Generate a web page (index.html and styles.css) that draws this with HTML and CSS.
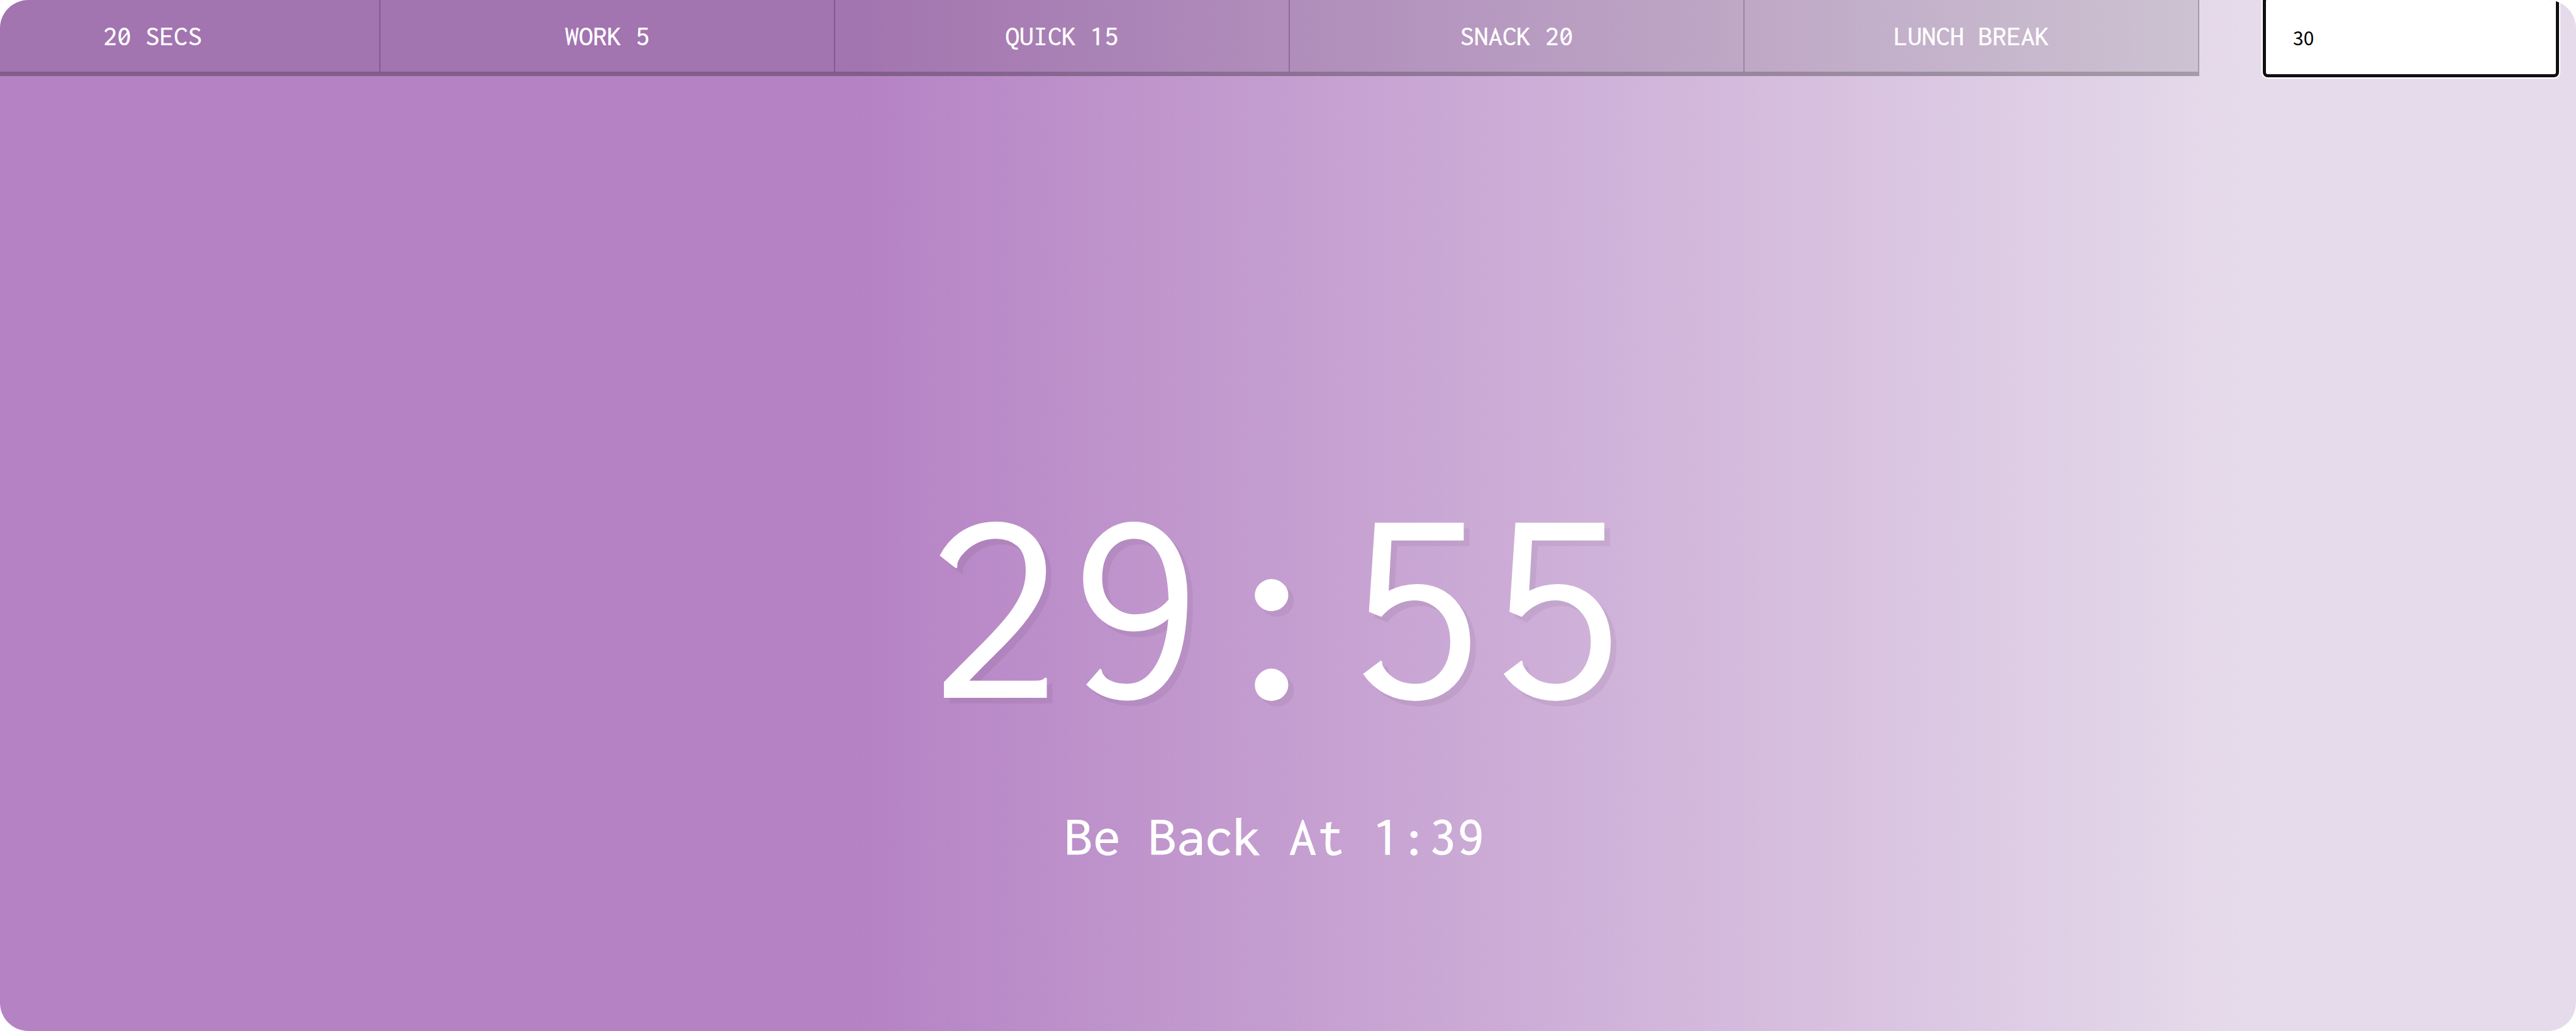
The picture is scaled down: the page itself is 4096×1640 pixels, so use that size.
FILE: index.html
```
<!DOCTYPE html>
<html lang="en">
<head>
<meta charset="utf-8">
<title>Countdown Timer</title>
<link rel="stylesheet" href="styles.css">
</head>
<body>
<div class="timer">
  <header class="controls">
    <nav class="presets" aria-label="Presets">
      <button class="preset" type="button">20 Secs</button>
      <button class="preset" type="button">Work 5</button>
      <button class="preset" type="button">Quick 15</button>
      <button class="preset" type="button">Snack 20</button>
      <button class="preset" type="button">Lunch Break</button>
    </nav>
    <form class="custom">
      <input class="minutes" type="text" name="minutes" aria-label="Minutes" value="30">
    </form>
  </header>
  <main class="display">
    <h1 class="time-left">29:55</h1>
    <p class="end-time">Be Back At 1:39</p>
  </main>
</div>
</body>
</html>
```
FILE: styles.css
```
* {
  box-sizing: border-box;
}

body {
  margin: 0;
  background: #fff;
  color: #fff;
  font-family: Inconsolata, monospace;
  font-weight: 500;
}

.timer {
  display: flex;
  flex-direction: column;
  min-height: 100vh;
  overflow: hidden;
  border-radius: 45px;
  background: linear-gradient(90deg, #b582c4 33%, #e6dbeb 87%);
}

.controls {
  display: flex;
  align-items: flex-start;
  gap: 101px;
  height: 123px;
  padding-right: 27px;
}

.presets {
  display: flex;
  flex: 1;
  margin-left: -118px;
}

.preset {
  flex: 1;
  height: 121px;
  padding: 0;
  border: 0;
  border-right: 2px solid rgba(0, 0, 0, 0.2);
  border-bottom: 7px solid rgba(0, 0, 0, 0.2);
  background: rgba(0, 0, 0, 0.1);
  color: #fff;
  font: inherit;
  font-size: 45px;
  text-transform: uppercase;
}

.custom {
  width: 471px;
  margin-top: -6px;
}

.minutes {
  display: block;
  width: 100%;
  height: 129px;
  padding: 0 43px;
  border: 5px solid #101010;
  border-radius: 8px;
  box-shadow: 0 0 0 2px #fff;
  background: #fff;
  color: #000;
  font-family: "Noto Sans CJK JP", sans-serif;
  font-size: 30px;
}

.display {
  display: flex;
  flex: 1;
  flex-direction: column;
  align-items: center;
  justify-content: center;
  gap: 79px;
  padding: 371px 42px 0 0;
}

.time-left {
  margin: 0;
  font-size: 447px;
  font-weight: 400;
  line-height: 448px;
  text-shadow: 9px 9px 0 rgba(0, 0, 0, 0.05);
}

.end-time {
  margin: 0;
  font-size: 89px;
  line-height: 134px;
}
```
